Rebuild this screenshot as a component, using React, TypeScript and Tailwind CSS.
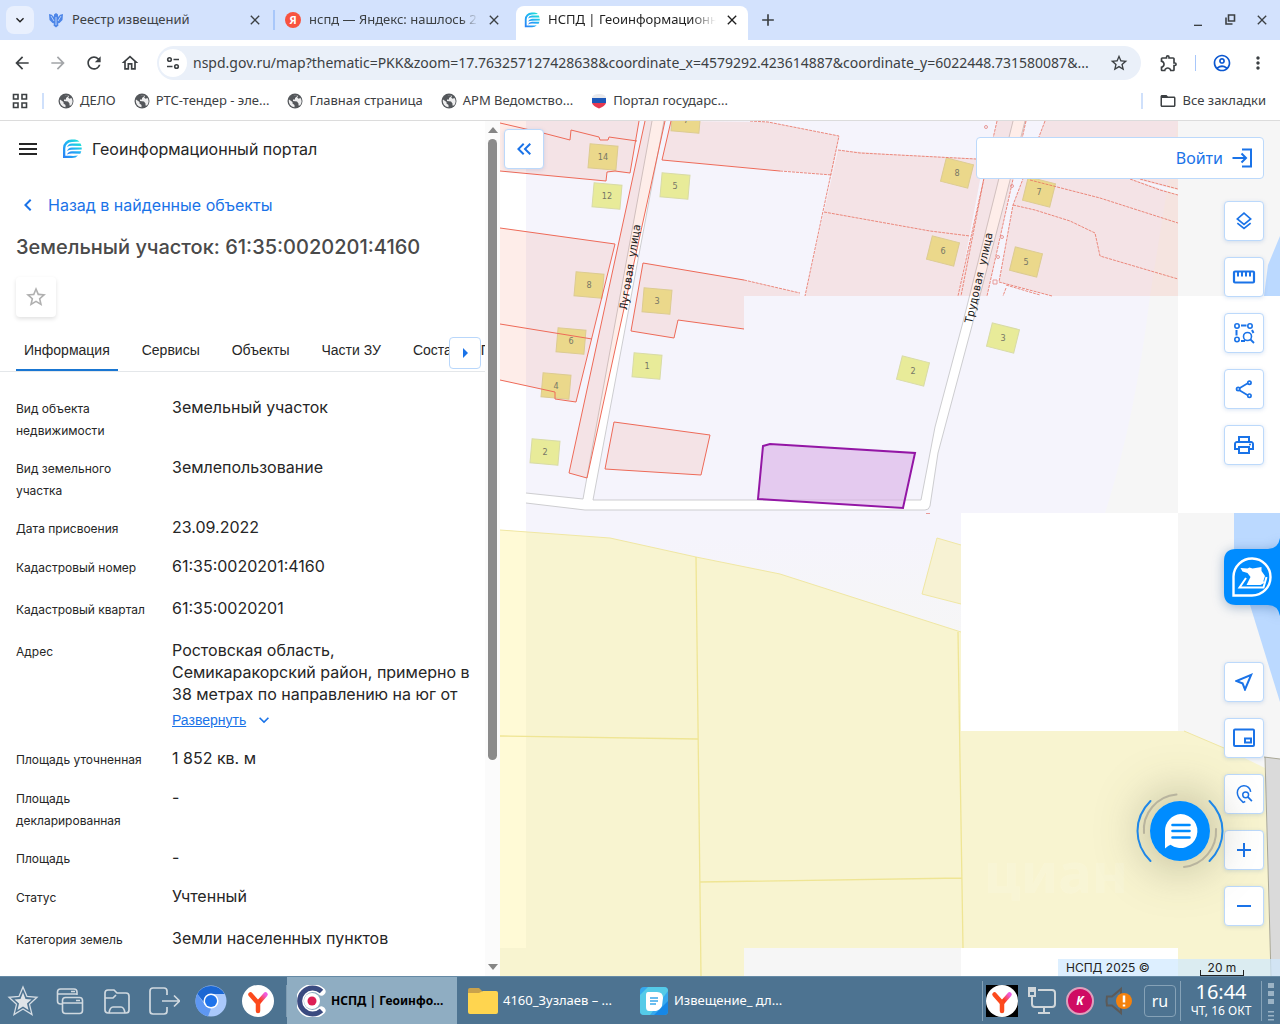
import type { ReactNode } from "react";
import {
    MdAdd, MdArrowBack, MdArrowForward, MdArrowRight, MdClose, MdFolderOpen, MdKeyboardArrowDown,
    MdKeyboardArrowLeft, MdKeyboardDoubleArrowLeft, MdMenu, MdMinimize, MdMoreVert, MdOutlineAccountCircle,
    MdOutlineExtension, MdOutlineHome, MdOutlineNearMe, MdOutlinePrint, MdRefresh, MdRemove, MdStarBorder,
} from "react-icons/md";

const BOOKMARKS = ["ДЕЛО", "РТС-тендер - эле...", "Главная страница", "АРМ Ведомство..."];

const PANEL_TABS = ["Информация", "Сервисы", "Объекты", "Части ЗУ", "Состав ЕЗП"];

const ADDRESS = "Ростовская область, Семикаракорский район, примерно в 38 метрах по направлению на юг от";

type Row = { label: string; value: string; tall?: boolean; expandable?: boolean };

const ROWS: Row[] = [
    { label: "Вид объекта недвижимости", value: "Земельный участок" },
    { label: "Вид земельного участка", value: "Землепользование" },
    { label: "Дата присвоения", value: "23.09.2022" },
    { label: "Кадастровый номер", value: "61:35:0020201:4160", tall: true },
    { label: "Кадастровый квартал", value: "61:35:0020201", tall: true },
    { label: "Адрес", value: ADDRESS, expandable: true },
    { label: "Площадь уточненная", value: "1 852 кв. м" },
    { label: "Площадь декларированная", value: "-" },
    { label: "Площадь", value: "-" },
    { label: "Статус", value: "Учтенный", tall: true },
    { label: "Категория земель", value: "Земли населенных пунктов" },
];

// [number, center x, center y, rotation, lies on a registered parcel]
const BUILDINGS: [string, number, number, number, boolean][] = [
    ["7", 686, 120, 5, true],
    ["14", 603, 157, 5, true],
    ["12", 607, 196, 5, false],
    ["5", 675, 186, 5, false],
    ["8", 589, 285, 5, true],
    ["3", 657, 301, 5, true],
    ["6", 571, 341, 5, true],
    ["4", 556, 386, 5, true],
    ["1", 647, 366, 5, false],
    ["2", 545, 452, 5, false],
    ["8", 957, 173, 14, true],
    ["7", 1039, 192, 14, true],
    ["6", 943, 251, 14, true],
    ["5", 1026, 262, 14, true],
    ["3", 1003, 338, 14, false],
    ["2", 913, 371, 14, false],
];

function PortalLogo({ className }: { className: string }) {
    return (
        <svg viewBox="0 0 20 20" className={className} aria-hidden="true">
            <defs>
                <linearGradient id="portal" x1="1" y1="0" x2="0" y2="1">
                    <stop offset="0" stopColor="#19e6d2" />
                    <stop offset="0.5" stopColor="#22b2f5" />
                    <stop offset="1" stopColor="#2a7df5" />
                </linearGradient>
            </defs>
            <path d="M1 19V9a8.500 8.500 0 0 1 8.500-8.500H13q3 .3 4.500 2L10 3Q3.500 3.500 3.300 9.500v7.300h5.200q4 .3 7.500-.3-2.200 2.500-6 2.500z" fill="url(#portal)" />
            <path d="M5 8Q6 4.700 10 4.400h8.500l1 2.600L10 6.800Q7 6.800 5 8zM5 12q1-3.200 5-3.600h9.700v2.200L10 10.800q-3 0-5 1.200zM5 15.500q1-3 5-3.300h9.300l-1 2.500L10 14.500q-3 0-5 1z" fill="url(#portal)" />
        </svg>
    );
}

function Globe() {
    return (
        <svg viewBox="0 0 16 16" className="size-4 shrink-0" aria-hidden="true">
            <circle cx="8" cy="8" r="7.500" fill="#54575b" />
            <path d="M2 6.500 5.500 9v1.500l2 1.500v2.300A6.300 6.300 0 0 1 2 6.500zM6.500 2.200l3 .1.500 1.200-2 1.500v1.500H6v1.500l4 .5 1.500 2v2h1.300A6.200 6.200 0 0 0 13.500 5l-2 .8-1.300-1.300L11 3a6 6 0 0 0-4.500-.8z" fill="#fff" opacity="0.9" />
        </svg>
    );
}

function YandexY({ className }: { className: string }) {
    return (
        <svg viewBox="0 0 32 32" className={className} aria-hidden="true">
            <defs>
                <linearGradient id="ybranch" x1="0" y1="1" x2="1" y2="0">
                    <stop offset="0.3" stopColor="#fc3f1d" />
                    <stop offset="1" stopColor="#f05ce0" />
                </linearGradient>
            </defs>
            <circle cx="16" cy="16" r="16" fill="#fff" />
            <path d="M16 18 23.500 9.500" stroke="url(#ybranch)" strokeWidth="4.500" strokeLinecap="round" />
            <path d="M8.500 9.500 16 18v8" stroke="#fc4a1d" strokeWidth="4.500" fill="none" strokeLinecap="round" strokeLinejoin="round" />
        </svg>
    );
}

function BrowserHeader() {
    return (
        <header className="shrink-0 border-b border-[#dcdcdc] bg-white font-['Noto_Sans',sans-serif] text-[#3c4043]">
            <div className="flex h-10 items-center bg-[#d3e2fd] pl-1.5 text-[13px]">
                <button aria-label="Поиск вкладок" className="flex h-7 w-7 items-center justify-center rounded-lg bg-[#e9f0fe] text-[#1f1f1f]">
                    <MdKeyboardArrowDown className="size-4" />
                </button>
                <div className="flex w-[241px] items-center border-r-2 border-[#a8c7fa] pr-2.5 pl-3.5">
                    <svg viewBox="0 0 16 16" className="mr-2 size-4 shrink-0" aria-hidden="true">
                        <path d="M1 2q3 0 5 3V2.500L8 1l2 1.500V5q2-3 5-3l-.5 6-3 3-1.500.5.500 2L8 15.500 5.500 13.500l.5-2L4.500 11l-3-3z" fill="#4d86e8" />
                        <path d="M8 5v8M3 4l3 5M13 4l-3 5" stroke="#d3e2fd" strokeWidth="0.8" />
                    </svg>
                    <span className="flex-1 truncate">Реестр извещений</span>
                    <button aria-label="Закрыть вкладку"><MdClose className="size-4" /></button>
                </div>
                <div className="flex w-[241px] items-center pr-3.5 pl-2.5">
                    <span className="mr-2 flex size-4 shrink-0 items-center justify-center rounded-full bg-[#f8533f] text-[11px] font-bold text-white">Я</span>
                    <span className="flex-1 overflow-hidden whitespace-nowrap mask-r-from-90%">нспд — Яндекс: нашлось 2</span>
                    <button aria-label="Закрыть вкладку" className="ml-2"><MdClose className="size-4" /></button>
                </div>
                <div className="mt-1.5 flex h-[34px] w-[232px] items-center rounded-t-lg bg-white pr-2 pb-1.5 pl-2 text-[#1f1f1f]">
                    <PortalLogo className="mr-2 size-4 shrink-0" />
                    <span className="flex-1 overflow-hidden whitespace-nowrap mask-r-from-85%">НСПД | Геоинформационн</span>
                    <button aria-label="Закрыть вкладку" className="ml-2"><MdClose className="size-4" /></button>
                </div>
                <button aria-label="Новая вкладка" className="ml-2.5"><MdAdd className="size-5" /></button>
                <div className="ml-auto flex items-center gap-4 pr-2.5">
                    <button aria-label="Свернуть"><MdMinimize className="size-4" /></button>
                    <button aria-label="Восстановить">
                        <svg viewBox="0 0 16 16" className="size-4" fill="none" stroke="currentColor" strokeWidth="1.600" aria-hidden="true">
                            <path d="M6.500 3h6v6h-6zM4 5.500V12h6.500" />
                        </svg>
                    </button>
                    <button aria-label="Закрыть"><MdClose className="size-4" /></button>
                </div>
            </div>
            <div className="flex h-[45px] items-center pr-3 pl-3">
                <div className="flex w-[145px] shrink-0 items-center gap-4">
                    <button aria-label="Назад"><MdArrowBack className="size-5" /></button>
                    <button aria-label="Вперёд" className="text-[#a3a5a8]"><MdArrowForward className="size-5" /></button>
                    <button aria-label="Обновить"><MdRefresh className="size-5" /></button>
                    <button aria-label="Домой"><MdOutlineHome className="size-5" /></button>
                </div>
                <div className="flex h-[34px] min-w-0 flex-1 items-center rounded-full bg-[#eaf0f9] pr-3 pl-0.5">
                    <span className="mr-1.5 flex size-7 shrink-0 items-center justify-center rounded-full bg-white">
                        <svg viewBox="0 0 16 16" className="size-4" fill="none" stroke="currentColor" strokeWidth="1.600" aria-hidden="true">
                            <circle cx="4.500" cy="4.500" r="1.800" />
                            <circle cx="11.500" cy="11.500" r="1.800" />
                            <path d="M8.500 4.500H14M2 11.500h5.500" />
                        </svg>
                    </span>
                    <input
                        aria-label="Адресная строка"
                        className="min-w-0 flex-1 bg-transparent text-sm outline-none"
                        defaultValue="nspd.gov.ru/map?thematic=PKK&zoom=17.763257127428638&coordinate_x=4579292.423614887&coordinate_y=6022448.731580087&..."
                    />
                    <button aria-label="В закладки"><MdStarBorder className="size-5" /></button>
                </div>
                <div className="flex shrink-0 items-center pl-[18px]">
                    <button aria-label="Расширения"><MdOutlineExtension className="size-5" /></button>
                    <span className="mr-4 ml-4 h-4 w-px bg-[#a8c7fa]" />
                    <button aria-label="Профиль" className="text-[#0b57d0]"><MdOutlineAccountCircle className="size-5" /></button>
                    <button aria-label="Меню" className="ml-4"><MdMoreVert className="size-5" /></button>
                </div>
            </div>
            <div className="flex h-[35px] items-center pr-3.5 pb-1 pl-3 text-[13px]">
                <button aria-label="Приложения">
                    <svg viewBox="0 0 16 16" className="size-4" fill="none" stroke="currentColor" strokeWidth="1.600" aria-hidden="true">
                        <path d="M1.500 1.500h4.500v4.500H1.500zM10 1.500h4.500v4.500H10zM1.500 10h4.500v4.500H1.500zM10 10h4.500v4.500H10z" />
                    </svg>
                </button>
                <span className="mx-3.5 h-4 w-0.5 bg-[#cfe0fb]" />
                <nav className="flex items-center gap-[18px]">
                    {BOOKMARKS.map((name) => (
                        <a key={name} href="#" className="flex items-center gap-1.5">
                            <Globe />
                            {name}
                        </a>
                    ))}
                    <a href="#" className="flex items-center gap-1.5">
                        <svg viewBox="0 0 16 16" className="size-4" aria-hidden="true">
                            <path d="M1 5Q1.500 1 8 1t7 4z" fill="#e9e9ec" />
                            <path d="M1 5h14v5H1z" fill="#1c58b8" />
                            <path d="M1 10h14q-1 3-7 5.500Q2 13 1 10z" fill="#e63950" />
                        </svg>
                        Портал государс...
                    </a>
                </nav>
                <span className="mr-4 ml-auto h-4 w-0.5 bg-[#cfe0fb]" />
                <button className="flex items-center gap-1.5">
                    <MdFolderOpen className="size-[18px]" />
                    Все закладки
                </button>
            </div>
        </header>
    );
}

function InfoRow({ row }: { row: Row }) {
    return (
        <div className={`flex items-baseline ${row.tall ? "min-h-7" : "min-h-[25px]"}`}>
            <dt className="w-[140px] shrink-0 pr-2 text-xs leading-[22px]">{row.label}</dt>
            <dd className="ml-4 min-w-0 flex-1 text-base leading-[22px]">
                {row.value}
                {row.expandable && (
                    <button className="mt-1 mb-0.5 flex items-center gap-2 font-['Liberation_Sans',sans-serif] text-sm leading-[22px] text-[#1a73e8]">
                        <span className="underline">Развернуть</span>
                        <MdKeyboardArrowDown className="size-5" />
                    </button>
                )}
            </dd>
        </div>
    );
}

function ObjectPanel() {
    return (
        <aside className="flex w-[500px] shrink-0 bg-white font-['Inter',sans-serif] text-[#262626]">
            <div className="min-w-0 flex-1 overflow-hidden">
                <div className="flex h-14 items-center px-4">
                    <button aria-label="Меню"><MdMenu className="size-6" /></button>
                    <PortalLogo className="mr-2.5 ml-5.5 size-5" />
                    <span className="text-base">Геоинформационный портал</span>
                </div>
                <a href="#" className="flex h-14 items-center gap-2 px-4 text-base text-[#1a73e8]">
                    <MdKeyboardArrowLeft className="size-6" />
                    Назад в найденные объекты
                </a>
                <h1 className="px-4 text-xl leading-7 font-medium text-[#4a4a4a]">Земельный участок: 61:35:0020201:4160</h1>
                <button aria-label="В избранное" className="mt-4 ml-4 flex size-10 items-center justify-center rounded text-[#b0b0b0] shadow-[0_2px_4px_rgba(0,0,0,0.12)]">
                    <MdStarBorder className="size-6" />
                </button>
                <div className="relative mt-3">
                    <div role="tablist" className="flex gap-4 overflow-hidden border-b border-[#e4e7ea] pl-4 font-['Liberation_Sans',sans-serif] text-sm whitespace-nowrap">
                        {PANEL_TABS.map((tab, i) => (
                            <button
                                key={tab}
                                role="tab"
                                aria-selected={i === 0}
                                className={`h-[42px] border-b-2 px-2 pt-0.5 ${i === 0 ? "border-[#1976d2]" : "border-transparent"}`}
                            >
                                {tab}
                            </button>
                        ))}
                    </div>
                    <button aria-label="Следующие вкладки" className="absolute top-2 right-1 flex size-8 items-center justify-center rounded border border-[#b9d7fb] bg-white text-[#1a73e8]">
                        <MdArrowRight className="size-6" />
                    </button>
                </div>
                <dl className="flex flex-col gap-3.5 pt-6 pr-3 pl-4">
                    {ROWS.map((row) => <InfoRow key={row.label} row={row} />)}
                </dl>
            </div>
            <div className="flex w-[15px] shrink-0 flex-col items-center bg-[#fbfbfb] py-1.5">
                <svg viewBox="0 0 10 6" className="h-1.5 w-2.5" aria-hidden="true"><path d="M0 6 5 0l5 6z" fill="#858585" /></svg>
                <div className="mt-1.5 mb-2 flex w-[9px] flex-1 flex-col">
                    <div className="h-[76%] rounded-full bg-[#8b8b8b]" />
                </div>
                <svg viewBox="0 0 10 6" className="h-1.5 w-2.5" aria-hidden="true"><path d="M0 0 5 6l5-6z" fill="#858585" /></svg>
            </div>
        </aside>
    );
}

function CadastralMap() {
    return (
        <svg viewBox="500 121 780 855" preserveAspectRatio="xMidYMid slice" className="absolute inset-0 size-full" role="img" aria-label="Публичная кадастровая карта">
            <defs>
                <linearGradient id="fade" x1="0" y1="0" x2="0" y2="1">
                    <stop offset="0.8" stopColor="#f5f4fc" />
                    <stop offset="1" stopColor="#f6f6f6" />
                </linearGradient>
            </defs>
            <path d="M500 121h780v855H500z" fill="#f6f6f6" />
            <path d="M526 121H1178L1150 296Q1135 420 1105 513L961 600V640H526z" fill="url(#fade)" />
            <path d="M500 121h26v855h-26zM1178 296h102v217h-102zM961 513h217v218H961zM961 948h217v28H961z" fill="#fff" />

            {/* water */}
            <path d="M1264 296 1268 265 1280 236V296zM1234 513H1280V702L1250 605 1234 560z" fill="#bbd9ff" />
            <path d="M1265 757 1280 759V976H1271z" fill="#dadada" />

            {/* roads */}
            <path d="M652 121H664L593 500H921L935 427 963 322 999 178 1013 121H1025L1005 200 973 322 938 453 930 506Q929 510 925 510H585L526 503V493L583 499z" fill="#fff" />
            <path d="M526 493 583 499 652 121M664 121 593 500H921L935 427 963 322 999 178 1013 121M1025 121 1005 200 973 322 938 453 930 506Q929 510 925 510H585L526 503" fill="none" stroke="#cdcdd0" />

            {/* yellow parcels */}
            <path d="M500 530 610 538 696 557 780 574 961 632V731H1184L1224 748 1265 768 1271 976H1178V948H744V976H500z" fill="#f8f4d0" />
            <path d="M500 530 526 532V948H500z" fill="#fffad6" />
            <path d="M961 545 937 538 922 594 961 604z" fill="#f7f2d3" />
            <path d="M500 530 610 538 696 557 780 574 961 632M961 545 937 538 922 594 961 604M1184 731 1224 748" fill="none" stroke="#f0e7a4" />
            <path d="M696 557 701 976M500 736 698 739M700 882 962 878M958 632 960 760 963 948" fill="none" stroke="#efe594" strokeWidth="1.300" />
            <path d="M1264 757 1280 759M1265 757 1271 976" stroke="#a9a796" fill="none" />
            <text x="984" y="893" className="fill-white font-['Noto_Sans',sans-serif] text-[56px] font-bold" opacity="0.12">циан</text>

            {/* registered parcels */}
            <g fill="#f43a10" fillOpacity="0.09">
                <path d="M500 121H639L630 173 607 172 606 181 500 171z" />
                <path d="M500 228 615 244 576 402 555 399V392L500 380z" />
                <path d="M645 121 569 473 587 478 665 121z" />
                <path d="M671 121 662 160 832 175 839 136 768 122z" />
                <path d="M838 150 888 154 984 159 958 296H805z" />
                <path d="M997 121H1026L987 296H958z" />
                <path d="M1045 121H1178V190L1130 178 1178 195V296H1052L999 282 1013 205z" />
                <path d="M643 263 745 280 800 293V296H744V329L678 320 674 338 631 331z" />
                <path d="M614 422 710 435 701 475 605 469z" />
            </g>

            {BUILDINGS.map(([number, x, y, angle, registered]) => (
                <g key={`${x}-${y}`}>
                    <rect
                        x={x - 14} y={y - 12} width="28" height="24"
                        fill={registered ? "#ebd88b" : "#e8eb99"}
                        stroke={registered ? "#dccb91" : "#d8dba6"}
                        transform={`rotate(${angle} ${x} ${y})`}
                    />
                    <text x={x} y={y + 3} textAnchor="middle" className="fill-[#777766] font-['DejaVu_Sans_Condensed','DejaVu_Sans',sans-serif] text-[9px]">{number}</text>
                </g>
            ))}

            <g fill="none" stroke="#ee6a58">
                <path d="M500 123 543 133 570 140 571 130 599 137 600 140H608L609 137 637 141M639 121 630 173 615 171 607 172 606 181 500 171" />
                <path d="M500 228 615 244 576 402 555 399V392L500 380M500 324 592 339" />
                <path d="M645 121 569 473 587 478 665 121" />
                <path d="M671 121 662 160 780 171" />
                <path d="M744 280 643 263 631 331 674 338 678 320 744 329" />
                <path d="M614 422 710 435 701 475 605 469z" />
            </g>
            <g fill="none" stroke="#e8705f" strokeWidth="0.800" strokeDasharray="3 1">
                <path d="M750 121 768 122 839 136 805 296M780 171 832 175M838 150 860 153 976 159M824 212 930 231 946 233 970 236M744 280 800 293" />
                <path d="M997 121 984 178 958 296M984 178 961 296M1026 121 987 296M1045 121 1013 205 999 282 1052 296M1006 288 1003 296M1006 285 1040 295" />
                <path d="M1030 180 1100 198 1178 223M1013 205 1035 210 1070 221 1095 233 1100 256 1178 279M1130 179 1160 190 1178 195M1140 179 1178 189" />
            </g>
            <g fill="none" stroke="#e89a98">
                <circle cx="986" cy="127" r="1.500" />
                <circle cx="1012" cy="186" r="1.500" />
                <circle cx="1002" cy="237" r="1.500" />
                <circle cx="998" cy="257" r="1.500" />
                <path d="M993 280h4v4h-4zM926 513.500h4" />
            </g>

            <g className="fill-[#222222] font-['DejaVu_Sans_Mono',monospace] text-[11px]">
                <text transform="translate(627 310) rotate(-81)">Луговая улица</text>
                <text transform="translate(972 324) rotate(-77)">Трудовая улица</text>
            </g>

            <path d="M763 446 770 444 915 453 903 508 758 499z" fill="#d9aee6" fillOpacity="0.6" stroke="#9316a5" strokeWidth="2" />
        </svg>
    );
}

function MapButton({ label, children }: { label: string; children: ReactNode }) {
    return (
        <button aria-label={label} className="flex size-10 items-center justify-center rounded border border-[#bcd9fb] bg-white text-[#1a73e8] shadow-[0_1px_4px_rgba(0,80,180,0.15)]">
            {children}
        </button>
    );
}

function LineIcon({ children, className = "size-6" }: { children: ReactNode; className?: string }) {
    return (
        <svg viewBox="0 0 24 24" className={className} fill="none" stroke="currentColor" strokeWidth="2" aria-hidden="true">
            {children}
        </svg>
    );
}

function ChatButton() {
    return (
        <button aria-label="Чат поддержки" className="absolute right-14 bottom-[101px] size-[88px]">
            <span className="absolute inset-3.5 rounded-full shadow-[0_0_48px_8px_rgba(90,90,60,0.35)]" />
            <svg viewBox="0 0 88 88" className="relative size-[88px]" fill="none" strokeLinecap="round" aria-hidden="true">
                <circle cx="44" cy="44" r="30" fill="#008cff" />
                <path d="M14.500 14Q1.500 27 1.500 44t13 30M73.500 14q13 13 13 30t-13 30" stroke="#1f87e8" strokeWidth="2" />
                <path d="M8 46A35.500 35.500 0 0 1 40.500 7.500M80 42A36 36 0 0 1 48 80" stroke="#a9a594" strokeWidth="2" opacity="0.75" />
                <path d="M44.500 27a17 17 0 1 1-10 30.800q-2 .5-5.500 3.700V44a17 17 0 0 1 15.500-17z" fill="#fff" />
                <path d="M36.500 38h17M36.500 44h17M36.500 50.500h17" stroke="#008cff" strokeWidth="2.600" />
            </svg>
        </button>
    );
}

function MapView() {
    return (
        <main className="relative min-w-0 flex-1 overflow-hidden">
            <CadastralMap />
            <div className="absolute top-2 left-1"><MapButton label="Свернуть панель"><MdKeyboardDoubleArrowLeft className="size-6" /></MapButton></div>

            <div className="absolute top-4 right-4 flex w-72 flex-col items-end">
                <button className="flex h-[42px] w-full items-center justify-end gap-2 rounded border border-[#bcd9fb] bg-white pr-2 font-['Noto_Sans',sans-serif] text-base text-[#1a73e8]">
                    Войти
                    <LineIcon><path d="M11 3.500h9v17h-9M1.500 12h13M10.500 7.500 15 12l-4.500 4.500" /></LineIcon>
                </button>
                <div className="mt-[22px] flex flex-col gap-4">
                    <MapButton label="Слои">
                        <LineIcon className="size-5"><path d="M12 2.500 20 9.500 12 16 4 9.500zM4 14.500l8 6.500 8-6.500" /></LineIcon>
                    </MapButton>
                    <MapButton label="Линейка">
                        <LineIcon><rect x="2" y="6.500" width="20" height="11" rx="1" strokeWidth="2.200" /><path d="M6 7v4.500M10 7v4.500M14 7v4.500M18 7v4.500" /></LineIcon>
                    </MapButton>
                    <MapButton label="Поиск по области">
                        <LineIcon>
                            <circle cx="5" cy="5" r="2.200" strokeWidth="1.600" /><circle cx="18" cy="5" r="2.200" strokeWidth="1.600" /><circle cx="5" cy="18.500" r="2.200" strokeWidth="1.600" />
                            <path d="M9 4.500h5.500M4.500 9v5.500M20 9l1.500 3M9 20h4" />
                            <circle cx="15.500" cy="15.500" r="4" strokeWidth="1.600" /><path d="m18.500 18.500 3.500 3.500" strokeWidth="1.800" />
                        </LineIcon>
                    </MapButton>
                    <MapButton label="Поделиться">
                        <LineIcon className="size-5"><path d="m6.500 11 10-6M6.500 13.500l10 6" /><circle cx="5" cy="12" r="2" /><circle cx="18.500" cy="4.500" r="2" /><circle cx="18.500" cy="20" r="2" /></LineIcon>
                    </MapButton>
                    <MapButton label="Печать"><MdOutlinePrint className="size-6" /></MapButton>
                </div>
            </div>

            <a href="#" aria-label="Виджет портала" className="absolute right-0 bottom-[359px] drop-shadow-[0_2px_6px_rgba(0,60,130,0.35)]">
                <svg viewBox="0 0 56 80" className="h-20 w-14" aria-hidden="true">
                    <path d="M12 12H44Q54 12 56 1V79Q54 68 44 68H12Q0 68 0 56V24Q0 12 12 12z" fill="#008cff" />
                    <path d="M9.500 58.500V39.500a18.500 18.500 0 1 1 18.500 19z" fill="none" stroke="#fff" strokeWidth="2.400" />
                    <path d="M16.500 31l7 .5 2-1 3 1 9-1.500v4l3.500 5-1.500 4.500.5 2.500-3.500 2H22.500l4-8-3-4-5-1.500z" fill="#fff" />
                    <path d="M22 41l-6.500 9.500h24l3-10.500" fill="none" stroke="#fff" strokeWidth="2" />
                </svg>
            </a>

            <div className="absolute right-4 bottom-[50px] flex flex-col gap-4">
                <MapButton label="Моё местоположение"><MdOutlineNearMe className="size-6" /></MapButton>
                <MapButton label="Обзорная карта">
                    <LineIcon><rect x="2" y="3.500" width="20" height="16.500" rx="1" /><path d="M13 12.500h6v4h-6z" /></LineIcon>
                </MapButton>
                <MapButton label="Поиск по координатам">
                    <LineIcon className="size-5"><path d="M13.500 21 11 22Q4 16 4 10.500a8 8 0 0 1 16-1" strokeWidth="1.800" /><circle cx="14" cy="13" r="3.500" strokeWidth="1.800" /><path d="m16.500 15.500 5 5" /></LineIcon>
                </MapButton>
                <MapButton label="Приблизить"><LineIcon><path d="M12 5v14M5 12h14" /></LineIcon></MapButton>
                <MapButton label="Отдалить"><MdRemove className="size-6" /></MapButton>
            </div>

            <ChatButton />

            <div className="absolute right-0 bottom-0 flex h-[17px] w-[222px] items-center justify-between bg-[#cfe8ff]/70 pr-9 pl-2 font-['Inter',sans-serif] text-xs text-[#222222]">
                <span>НСПД 2025 ©</span>
                <span className="relative w-11 text-center">
                    20 m
                    <span className="absolute inset-x-0 bottom-0 h-1.5 border-x border-b border-[#222222]" />
                </span>
            </div>
        </main>
    );
}

function Taskbar() {
    return (
        <footer className="flex h-12 shrink-0 items-center border-t border-[#668aa5] bg-[#4d7391] font-['Noto_Sans',sans-serif] text-[13px] text-white">
            <div className="flex w-[287px] shrink-0 items-center gap-[15px] border-r border-[#7f9cb2] pl-[7px]">
                <button aria-label="Избранное">
                    <svg viewBox="0 0 32 32" className="size-8" fill="none" stroke="#d5dde4" strokeWidth="1.300" aria-hidden="true">
                        <path d="m16 2 4 9.500 10 .8-7.500 7 2.500 10.200-9-5.500-9 5.500 2.500-10.200-7.500-7 10-.8z" />
                        <path d="m16 7.500 2.500 6.500 6 .5-4.500 4 1.500 6.500-5.500-3.500-5.500 3.500 1.500-6.500-4.500-4 6-.5z" fill="#dfe4e8" stroke="none" />
                    </svg>
                </button>
                <button aria-label="Окна">
                    <svg viewBox="0 0 32 32" className="size-8" fill="none" stroke="#d0d9e0" strokeWidth="1.600" aria-hidden="true">
                        <path d="M8 19H6.500a3 3 0 0 1-3-3V7a3 3 0 0 1 3-3H20a3 3 0 0 1 3 3v3M3.500 9H23M17 6.500h4" />
                        <rect x="8.500" y="12.500" width="20" height="16" rx="3" /><path d="M8.500 18h20M22 15.500h4" />
                    </svg>
                </button>
                <button aria-label="Файлы">
                    <svg viewBox="0 0 32 32" className="size-8" fill="none" stroke="#d0d9e0" strokeWidth="1.700" aria-hidden="true">
                        <path d="M4 25V8q0-3 3-3h6l3 3h9q3 0 3 3v14q0 3-3 3H7q-3 0-3-3zM4 13h8l3-3" /><path d="M8 28q1-6 4-6h8q3 0 4 6" />
                    </svg>
                </button>
                <button aria-label="Выход">
                    <svg viewBox="0 0 32 32" className="size-8" fill="none" stroke="#d0d9e0" strokeWidth="1.700" aria-hidden="true">
                        <path d="M19 10V6q0-3-3-3H5Q2 3 2 6v20q0 3 3 3h11q3 0 3-3v-4M14 16h17M26 10.500l5.500 5.500-5.500 5.500" />
                    </svg>
                </button>
                <button aria-label="Chromium">
                    <svg viewBox="0 0 32 32" className="size-8" aria-hidden="true">
                        <circle cx="16" cy="16" r="15.500" fill="#a9c8fb" />
                        <path d="M2.300 9A15.500 15.500 0 0 1 29.500 9H16L9.500 18z" fill="#1b67d3" />
                        <path d="M2.300 9 10 20l6 3.500-3 8A15.500 15.500 0 0 1 2.300 9z" fill="#5e97f2" />
                        <circle cx="16" cy="16" r="7.500" fill="#fff" /><circle cx="16" cy="16" r="6" fill="#1f73ea" />
                    </svg>
                </button>
                <button aria-label="Яндекс Браузер"><YandexY className="size-8" /></button>
            </div>
            <button className="flex h-full w-[170px] items-center bg-[#8fadc2] pl-2.5 font-bold whitespace-nowrap text-black">
                <svg viewBox="0 0 30 32" className="mr-1 h-8 w-[30px] shrink-0" aria-hidden="true">
                    <path d="M24.500 6.500A13 13 0 1 0 24.500 25.500" fill="none" stroke="#fff" strokeWidth="8" strokeLinecap="round" />
                    <circle cx="15" cy="16" r="8" fill="#fff" />
                    <path d="M24.500 6.500A13 13 0 1 0 24.500 25.500" fill="none" stroke="#3a4a80" strokeWidth="5" />
                    <circle cx="15" cy="16" r="4.500" fill="#dc1f55" />
                </svg>
                <span className="text-xs">НСПД | Геоинфо...</span>
            </button>
            <button className="flex h-full w-[173px] items-center pl-2.5">
                <svg viewBox="0 0 32 32" className="mr-1 size-8 shrink-0" aria-hidden="true">
                    <path d="M1 5q0-2 2-2h9l3 3v6H1z" fill="#c9a24c" />
                    <path d="M1 8h11l4-2h13q2 0 2 2v19q0 2-2 2H3q-2 0-2-2z" fill="#ffd54f" />
                </svg>
                4160_Зузлаев – ...
            </button>
            <button className="flex h-full items-center pl-2.5">
                <svg viewBox="0 0 28 28" className="mr-1.5 size-7 shrink-0" aria-hidden="true">
                    <rect width="28" height="28" rx="4" fill="#36a9ee" />
                    <path d="M0 8 8 0h16q4 0 4 4L10 28H4q-4 0-4-4z" fill="#55cbe8" />
                    <path d="M28 14v10q0 4-4 4H14z" fill="#1687e6" />
                    <path d="M8 5h9q6 0 6 6l-1 8q-2 4-6 5H9q-3 0-3-4V8q0-3 2-3z" fill="#fff" />
                    <path d="M10 11h8M10 14h8M10 17h6" stroke="#3aa8ea" strokeWidth="1.500" />
                </svg>
                Извещение_ дл...
            </button>
            <div className="ml-auto flex items-center pr-1.5">
                <span className="mr-[3px] h-10 w-px bg-[#86a2b7]" />
                <button aria-label="Яндекс" className="bg-black"><YandexY className="size-8" /></button>
                <button aria-label="Сеть" className="ml-2">
                    <svg viewBox="0 0 32 32" className="size-8" fill="none" stroke="#d0d6da" strokeWidth="2" aria-hidden="true">
                        <path d="M3 3h6v8H3zM5 3v4M7 3v4M6 11v8q0 3 3 3h17q3 0 3-3V8q0-3-3-3H12M18 22v5M12 28h12" />
                    </svg>
                </button>
                <button aria-label="Kaspersky" className="ml-2 flex size-7 items-center justify-center rounded-full border-2 border-[#dda0bd] bg-[#cf0b63] text-xs font-bold italic">K</button>
                <button aria-label="Громкость" className="ml-2.5">
                    <svg viewBox="0 0 32 32" className="size-8" fill="none" aria-hidden="true">
                        <path d="M3 11.500q-1 4.500 0 9h5l9 7.500V4l-9 7.500z" stroke="#5c5a58" strokeWidth="2" />
                        <circle cx="20" cy="16" r="8" fill="#f5820d" /><path d="M20 10.500v7M20 19.500v2" stroke="#fff" strokeWidth="2.500" />
                    </svg>
                </button>
                <button className="ml-2 h-8 w-8 rounded border border-[#86a2b7] text-base">ru</button>
                <span className="ml-1 h-10 w-px bg-[#86a2b7]" />
                <div className="flex w-20 flex-col items-center pb-1">
                    <time className="text-xl leading-6">16:44</time>
                    <span className="text-xs leading-3.5">ЧТ, 16 ОКТ</span>
                </div>
                <span className="mr-1.5 h-10 w-px bg-[#86a2b7]" />
                <svg viewBox="0 0 6 40" className="h-10 w-1.5" fill="#9bb3c5" aria-hidden="true">
                    <path d="M0 2h6v5H0zM0 10h6v5H0zM0 18h6v5H0zM0 30h6v1.500H0zM0 34h6v1.500H0zM0 38h6v1.500H0z" />
                </svg>
            </div>
        </footer>
    );
}

export default function App() {
    return (
        <div className="flex h-screen flex-col overflow-hidden">
            <BrowserHeader />
            <div className="flex min-h-0 flex-1">
                <ObjectPanel />
                <MapView />
            </div>
            <Taskbar />
        </div>
    );
}
